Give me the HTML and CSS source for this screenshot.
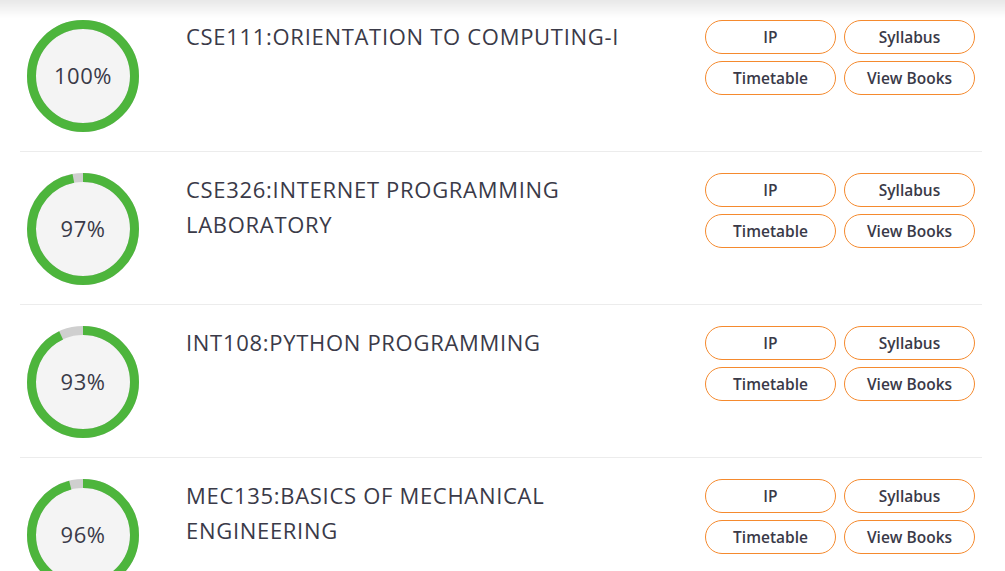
FILE: index.html
```html
<!DOCTYPE html>
<html>
<head>
<meta charset="utf-8">
<link rel="stylesheet" href="styles.css">
</head>
<body>
<div class="shade"></div>
<div class="list">
  <div class="row">
    <div class="dial">
      <svg viewBox="0 0 112 112" width="112" height="112">
        <circle cx="56" cy="56" r="51.5" fill="#f4f4f4" stroke="#cfcfcf" stroke-width="9"/>
        <circle cx="56" cy="56" r="51.5" fill="none" stroke="#4db53c" stroke-width="9" pathLength="100" stroke-dasharray="100 0" transform="rotate(-90 56 56)"/>
      </svg>
      <span class="pct">100%</span>
    </div>
    <div class="title">CSE111:ORIENTATION TO COMPUTING-I</div>
    <div class="btns">
      <a class="btn">IP</a><a class="btn">Syllabus</a><a class="btn">Timetable</a><a class="btn">View Books</a>
    </div>
  </div>
  <div class="row">
    <div class="dial">
      <svg viewBox="0 0 112 112" width="112" height="112">
        <circle cx="56" cy="56" r="51.5" fill="#f4f4f4" stroke="#cfcfcf" stroke-width="9"/>
        <circle cx="56" cy="56" r="51.5" fill="none" stroke="#4db53c" stroke-width="9" pathLength="100" stroke-dasharray="97 3" transform="rotate(-90 56 56)"/>
      </svg>
      <span class="pct">97%</span>
    </div>
    <div class="title">CSE326:INTERNET PROGRAMMING LABORATORY</div>
    <div class="btns">
      <a class="btn">IP</a><a class="btn">Syllabus</a><a class="btn">Timetable</a><a class="btn">View Books</a>
    </div>
  </div>
  <div class="row">
    <div class="dial">
      <svg viewBox="0 0 112 112" width="112" height="112">
        <circle cx="56" cy="56" r="51.5" fill="#f4f4f4" stroke="#cfcfcf" stroke-width="9"/>
        <circle cx="56" cy="56" r="51.5" fill="none" stroke="#4db53c" stroke-width="9" pathLength="100" stroke-dasharray="93 7" transform="rotate(-90 56 56)"/>
      </svg>
      <span class="pct">93%</span>
    </div>
    <div class="title">INT108:PYTHON PROGRAMMING</div>
    <div class="btns">
      <a class="btn">IP</a><a class="btn">Syllabus</a><a class="btn">Timetable</a><a class="btn">View Books</a>
    </div>
  </div>
  <div class="row">
    <div class="dial">
      <svg viewBox="0 0 112 112" width="112" height="112">
        <circle cx="56" cy="56" r="51.5" fill="#f4f4f4" stroke="#cfcfcf" stroke-width="9"/>
        <circle cx="56" cy="56" r="51.5" fill="none" stroke="#4db53c" stroke-width="9" pathLength="100" stroke-dasharray="96 4" transform="rotate(-90 56 56)"/>
      </svg>
      <span class="pct">96%</span>
    </div>
    <div class="title">MEC135:BASICS OF MECHANICAL ENGINEERING</div>
    <div class="btns">
      <a class="btn">IP</a><a class="btn">Syllabus</a><a class="btn">Timetable</a><a class="btn">View Books</a>
    </div>
  </div>
</div>
</body>
</html>
```
FILE: styles.css
```css
html, body {
  margin: 0;
  padding: 0;
  background: #ffffff;
  overflow: hidden;
}
body {
  font-family: "Open Sans", "Noto Sans", sans-serif;
  color: #3a3a4a;
}
.shade {
  position: fixed;
  top: 0;
  left: 0;
  right: 0;
  height: 18px;
  background: linear-gradient(to bottom, rgba(0,0,0,0.09), rgba(0,0,0,0));
  z-index: 2;
}
.list {
  margin: -1px 23px 0 20px;
}
.row {
  display: grid;
  grid-template-columns: 166px 1fr 270px;
  padding: 21px 7px 19px 0;
  border-bottom: 1px solid #ececec;
  min-height: 112px;
}
.dial {
  position: relative;
  width: 112px;
  height: 112px;
  margin-left: 7px;
}
.dial svg {
  display: block;
}
.pct {
  position: absolute;
  inset: 0 0 3px 0;
  display: flex;
  align-items: center;
  justify-content: center;
  font-size: 22px;
  letter-spacing: 0.5px;
  color: #3a3a48;
}
.title {
  font-size: 22px;
  letter-spacing: 0.7px;
  line-height: 35px;
  margin-top: -1px;
  padding-right: 30px;
  color: #3a3a48;
}
.btns {
  display: grid;
  grid-template-columns: 131px 131px;
  grid-auto-rows: 34px;
  column-gap: 8px;
  row-gap: 7px;
  align-content: start;
}
.btn {
  display: flex;
  align-items: center;
  justify-content: center;
  border: 1px solid #f58a2e;
  border-radius: 17px;
  font-size: 15.5px;
  font-weight: 600;
  color: #3a3a48;
}
```
